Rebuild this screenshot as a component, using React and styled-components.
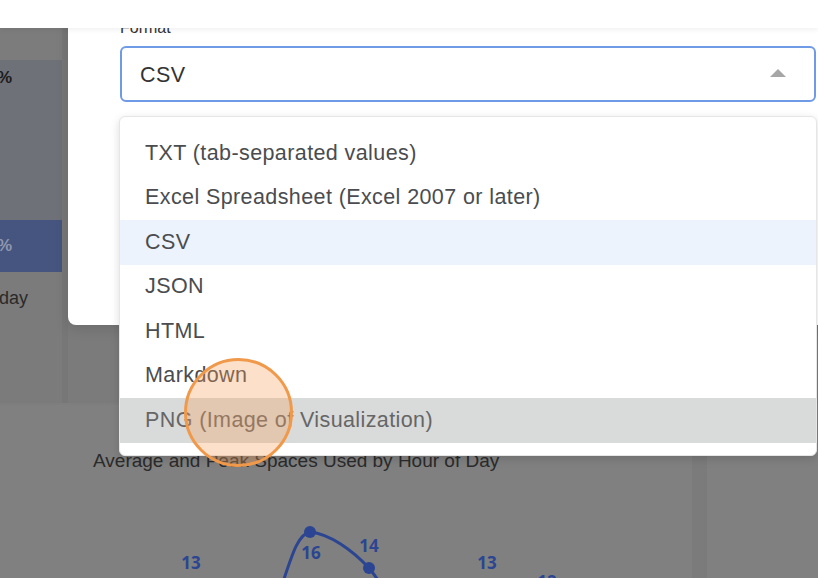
import React from 'react';
import styled, { createGlobalStyle } from 'styled-components';

const GlobalStyle = createGlobalStyle`
  html, body {
    margin: 0;
    padding: 0;
    background: #808080;
  }
  body {
    font-family: "Liberation Sans", Arial, sans-serif;
  }
`;

const Screen = styled.div`
  position: relative;
  width: 818px;
  height: 578px;
  overflow: hidden;
  background: #7b7b7b;
  display: flex;
  flex-direction: column;
`;

const TopBar = styled.div`
  position: relative;
  z-index: 5;
  height: 28px;
  flex: none;
  background: #fff;
  box-shadow: 0 2px 5px rgba(0, 0, 0, 0.06);
`;

const Upper = styled.div`
  display: flex;
  height: 375px;
  flex: none;
`;

const TableCol = styled.div`
  width: 62px;
  display: flex;
  flex-direction: column;
`;

const TableHead = styled.div`
  height: 32px;
  background: #7c7c7c;
`;

const TableCell = styled.div`
  height: ${(p) => p.$h}px;
  background: ${(p) => (p.$active ? '#45557f' : '#6e7178')};
  color: ${(p) => (p.$active ? '#8f97ad' : '#1c1c1c')};
  font-weight: bold;
  font-size: 17px;
  padding-top: ${(p) => p.$pad}px;
  box-sizing: border-box;
  display: flex;
  justify-content: flex-end;
  padding-right: 50px;
`;

const DayLabel = styled.div`
  margin-top: 16px;
  margin-left: -1px;
  font-size: 18px;
  color: #2a2a2a;
`;

const Gutter = styled.div`
  width: 6px;
  background: #777;
`;

const Lower = styled.div`
  flex: 1;
  display: flex;
  gap: 15px;
`;

const ChartCard = styled.div`
  width: 692px;
  background: #808080;
  border-top: 2px solid #7e7e7e;
  display: flex;
  flex-direction: column;
`;

const ChartTitle = styled.div`
  margin: 46px 0 0 93px;
  height: 20px;
  line-height: 20px;
  font-size: 19px;
  color: #2b2b2b;
  white-space: nowrap;
`;

const Chart = styled.svg`
  display: block;
`;

const SideCard = styled.div`
  flex: 1;
  background: #808080;
`;

const Modal = styled.div`
  position: absolute;
  left: 68px;
  top: 0;
  width: 800px;
  height: 325px;
  background: #fff;
  border-radius: 0 0 0 8px;
  box-shadow: 0 4px 14px rgba(0, 0, 0, 0.12);
  padding: 19px 0 0 52px;
  box-sizing: border-box;
  z-index: 3;
`;

const Label = styled.div`
  font-size: 16px;
  color: #333;
  margin-bottom: 9px;
`;

const SelectWrap = styled.div`
  position: relative;
  width: 696px;
`;

const SelectBox = styled.div`
  height: 56px;
  box-sizing: border-box;
  border: 2px solid #6f9be6;
  border-radius: 6px;
  display: flex;
  align-items: center;
  justify-content: space-between;
  padding: 2px 28px 0 18px;
  font-size: 21.5px;
  letter-spacing: 0.4px;
  color: #333;
`;

const Caret = styled.span`
  width: 0;
  height: 0;
  border-left: 8px solid transparent;
  border-right: 8px solid transparent;
  border-bottom: 8px solid #a6a6a6;
  margin-top: -4px;
`;

const Menu = styled.ul`
  position: absolute;
  left: -1px;
  top: 70px;
  width: 698px;
  margin: 0;
  padding: 14px 0 12px;
  list-style: none;
  background: #fff;
  border: 1px solid #e6e6e6;
  border-radius: 6px;
  box-shadow: 0 3px 10px rgba(0, 0, 0, 0.14);
  box-sizing: border-box;
`;

const Option = styled.li`
  height: 44.5px;
  display: flex;
  align-items: center;
  padding-left: 25px;
  font-size: 21.5px;
  letter-spacing: 0.4px;
  color: ${(p) => (p.$hover ? '#666' : '#4a4c4f')};
  background: ${(p) => (p.$selected ? '#edf3fc' : p.$hover ? '#d9dada' : 'transparent')};
`;

const ClickMark = styled.div`
  position: absolute;
  left: 184px;
  top: 358px;
  width: 109px;
  height: 109px;
  box-sizing: border-box;
  border-radius: 50%;
  border: 3px solid #f0994b;
  background: rgba(245, 160, 90, 0.32);
  z-index: 6;
  pointer-events: none;
`;

const options = [
  'TXT (tab-separated values)',
  'Excel Spreadsheet (Excel 2007 or later)',
  'CSV',
  'JSON',
  'HTML',
  'Markdown',
  'PNG (Image of Visualization)',
];

// chart coordinates are screen y values; the svg starts at y = 471
const labels = [
  { x: 191, y: 569, t: '13' },
  { x: 311, y: 559, t: '16' },
  { x: 369, y: 552, t: '14' },
  { x: 487, y: 569, t: '13' },
  { x: 547, y: 588, t: '12' },
];

export default function App() {
  return (
    <>
      <GlobalStyle />
      <Screen>
        <TopBar />
        <Upper>
          <TableCol>
            <TableHead />
            <TableCell $h={160} $pad={8}>
              %
            </TableCell>
            <TableCell $h={52} $pad={16} $active>
              %
            </TableCell>
            <DayLabel>day</DayLabel>
          </TableCol>
          <Gutter />
        </Upper>
        <Lower>
          <ChartCard>
            <ChartTitle>Average and Peak Spaces Used by Hour of Day</ChartTitle>
            <Chart width="692" height="107" viewBox="0 471 692 107">
              <path
                d="M282 585 C292 555 298 534 310 532 C330 534 352 550 369 568 C374 574 378 580 382 586"
                fill="none"
                stroke="#2b4592"
                strokeWidth="3"
              />
              <circle cx="310" cy="532" r="6" fill="#2b4592" />
              <circle cx="369" cy="568" r="6" fill="#2b4592" />
              {labels.map((l) => (
                <text
                  key={l.x}
                  x={l.x}
                  y={l.y}
                  textAnchor="middle"
                  fontFamily="'Open Sans', sans-serif"
                  fontWeight="700"
                  fontSize="17"
                  fill="#2b4592"
                >
                  {l.t}
                </text>
              ))}
            </Chart>
          </ChartCard>
          <SideCard />
        </Lower>

        <Modal>
          <Label>Format</Label>
          <SelectWrap>
            <SelectBox>
              CSV
              <Caret />
            </SelectBox>
            <Menu>
              {options.map((o) => (
                <Option key={o} $selected={o === 'CSV'} $hover={o.startsWith('PNG')}>
                  {o}
                </Option>
              ))}
            </Menu>
          </SelectWrap>
        </Modal>
        <ClickMark />
      </Screen>
    </>
  );
}
